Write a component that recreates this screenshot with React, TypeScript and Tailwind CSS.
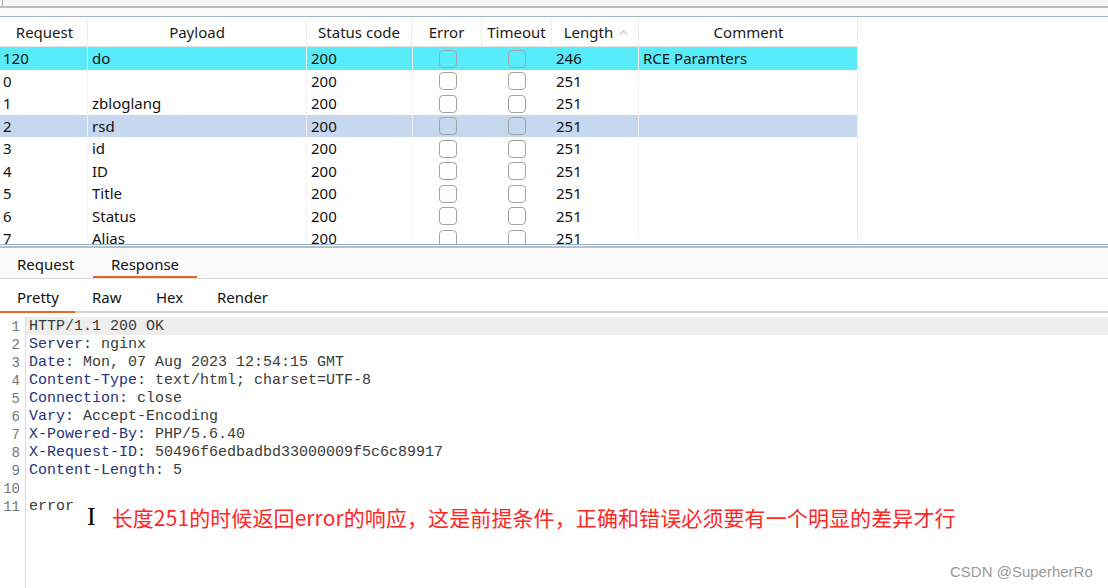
import {ChevronUp} from 'lucide-react';

type row = {
    id: string,
    payload: string,
    status: string,
    length: string,
    comment: string,
    tone: string
}

const rows: row[] = [
    {id: '120', payload: 'do', status: '200', length: '246', comment: 'RCE Paramters', tone: 'bg-[#58ecfa]'},
    {id: '0', payload: '', status: '200', length: '251', comment: '', tone: ''},
    {id: '1', payload: 'zbloglang', status: '200', length: '251', comment: '', tone: ''},
    {id: '2', payload: 'rsd', status: '200', length: '251', comment: '', tone: 'bg-[#c6d8ef]'},
    {id: '3', payload: 'id', status: '200', length: '251', comment: '', tone: ''},
    {id: '4', payload: 'ID', status: '200', length: '251', comment: '', tone: ''},
    {id: '5', payload: 'Title', status: '200', length: '251', comment: '', tone: ''},
    {id: '6', payload: 'Status', status: '200', length: '251', comment: '', tone: ''},
    {id: '7', payload: 'Alias', status: '200', length: '251', comment: '', tone: ''},
];

// key / value pairs of the response, null key = plain line
const lines: [string | null, string][] = [
    [null, 'HTTP/1.1 200 OK'],
    ['Server:', ' nginx'],
    ['Date:', ' Mon, 07 Aug 2023 12:54:15 GMT'],
    ['Content-Type:', ' text/html; charset=UTF-8'],
    ['Connection:', ' close'],
    ['Vary:', ' Accept-Encoding'],
    ['X-Powered-By:', ' PHP/5.6.40'],
    ['X-Request-ID:', ' 50496f6edbadbd33000009f5c6c89917'],
    ['Content-Length:', ' 5'],
    [null, ''],
    [null, 'error'],
];

const cols = "grid grid-cols-[88px_219px_105px_70px_70px_87px_219px]";

const Box = () => (
    <div className="w-[18px] h-[18px] rounded-[4px] border border-[#a3a3a3]" />
);

const App = () => {
    return (
        <div className="w-[1108px] h-[588px] overflow-hidden bg-white relative font-['Noto_Sans','Noto_Sans_CJK_SC',sans-serif] text-[#111]">
            {/* top strip */}
            <div className="h-[6px] bg-[#f6f6f6]">
                <div className="ml-[2px] h-full border-l border-[#b4b4b4]" />
            </div>
            <div className="h-[2px] bg-[#bdbdbd]" />
            <div className="h-[8px] bg-[#fafafa]" />
            <div className="h-[1px] bg-[#9fb2c8]" />

            {/* intruder results table */}
            <div className="flex">
                <div className="w-[858px] border-r border-[#ececec]">
                    <div className={`${cols} h-[30px] border-b border-[#e2e2e2] text-[15px] text-[#1a1a1a]`}>
                        <div className="flex items-center justify-center border-r border-[#ececec] mt-[2px] pl-[2px]">Request</div>
                        <div className="flex items-center justify-center border-r border-[#ececec] mt-[2px]">Payload</div>
                        <div className="flex items-center justify-center border-r border-[#ececec] mt-[2px]">Status code</div>
                        <div className="flex items-center justify-center border-r border-[#ececec] mt-[2px]">Error</div>
                        <div className="flex items-center justify-center border-r border-[#ececec] mt-[2px]">Timeout</div>
                        <div className="flex items-center justify-center gap-[4px] border-r border-[#ececec] mt-[2px] pl-[4px]">
                            Length
                            <ChevronUp size={13} strokeWidth={1.5} className="text-[#888]" />
                        </div>
                        <div className="flex items-center justify-center mt-[2px]">Comment</div>
                    </div>
                    <div className="h-[197px] overflow-hidden">
                        {rows.map((r) => (
                            <div key={r.id} className={`${cols} h-[22.5px] text-[15px] leading-[23px] ${r.tone}`}>
                                <div className="pl-[3px] border-r border-[#f3f3f3]">{r.id}</div>
                                <div className="pl-[4px] border-r border-[#f3f3f3]">{r.payload}</div>
                                <div className="pl-[4px]">{r.status}</div>
                                <div className="flex items-center justify-center border-l border-[#f3f3f3]"><Box /></div>
                                <div className="flex items-center justify-center"><Box /></div>
                                <div className="pl-[4px] border-r border-[#f3f3f3]">{r.length}</div>
                                <div className="pl-[4px]">{r.comment}</div>
                            </div>
                        ))}
                    </div>
                </div>
                <div className="flex-1" />
            </div>
            <div className="h-[1px] bg-[#8fb0d9]" />
            <div className="h-[1px]" />
            <div className="h-[2px] bg-[#bdbdbd]" />

            {/* request / response tabs */}
            <div className="h-[31px] bg-[#fafafa] border-b border-[#dcdcdc] flex text-[15px] leading-[20px]">
                <div className="w-[93px] pt-[6px] pl-[17px]">Request</div>
                <div className="w-[104px] pt-[6px] text-center border-b-2 border-[#e8652b]">Response</div>
            </div>

            {/* view tabs */}
            <div className="h-[34px] border-b-2 border-[#cfcfcf] flex text-[15px] leading-[20px]">
                <div className="w-[75px] pt-[8px] pl-[17px] border-b-2 border-[#e8652b] -mb-[2px]">Pretty</div>
                <div className="w-[75px] pt-[8px] pl-[17px]">Raw</div>
                <div className="w-[62px] pt-[8px] pl-[6px]">Hex</div>
                <div className="pt-[8px] pl-[5px]">Render</div>
            </div>

            {/* response body */}
            <div className="flex pt-[4px] h-[300px]">
                <div className="w-[26px] border-r border-[#dcdcdc] pr-[5px] font-['Liberation_Mono',monospace] text-[14px] text-[#777] text-right">
                    {lines.map((_, i) => (
                        <div key={i} className="h-[18px] leading-[20px]">{i + 1}</div>
                    ))}
                </div>
                <div className="flex-1 font-['Liberation_Mono',monospace] text-[15px]">
                    {lines.map(([k, v], i) => (
                        <div key={i} className={`h-[18px] leading-[20px] pl-[3px] whitespace-pre ${i === 0 ? 'bg-[#eeeeee]' : ''}`}>
                            {k && <span className="text-[#26327a]">{k}</span>}
                            <span className="text-[#3a3a3a]">{v}</span>
                        </div>
                    ))}
                </div>
            </div>

            {/* annotation over the editor */}
            <div className="absolute left-[87px] top-[504px] flex items-center gap-[16px]">
                <span className="font-['Liberation_Serif',serif] text-[26px] leading-[26px] text-black">I</span>
                <span className="font-['Noto_Sans_CJK_SC',sans-serif] text-[21px] leading-[26px] tracking-[0.1px] text-[#ff2626]">
                    长度251的时候返回error的响应，这是前提条件，正确和错误必须要有一个明显的差异才行
                </span>
            </div>
            <div className="absolute left-[950px] top-[561px] font-['Liberation_Sans',sans-serif] text-[15px] text-[#9a9a9a]">
                CSDN @SuperherRo
            </div>
        </div>
    );
};

export default App;
